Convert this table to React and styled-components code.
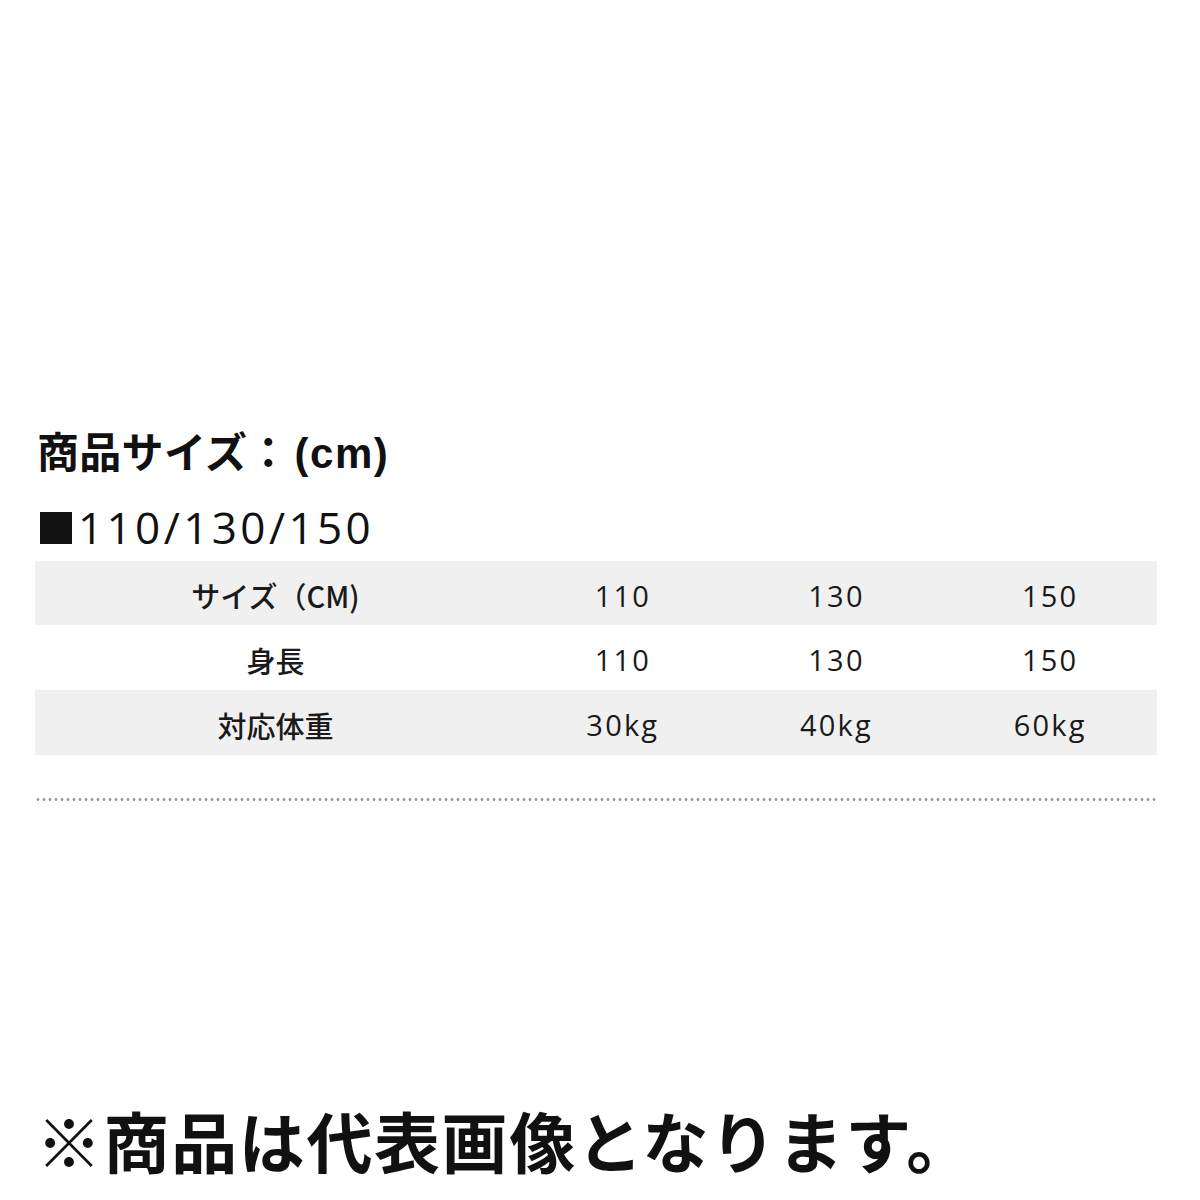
import React from "react";
import styled, { createGlobalStyle } from "styled-components";

const Global = createGlobalStyle`
  html, body { margin: 0; padding: 0; background: #fff; }
  body { font-family: "Noto Sans CJK JP", "Noto Sans", sans-serif; color: #111; }
`;

const Page = styled.div`
  width: 1200px;
  height: 1200px;
  box-sizing: border-box;
  padding: 424px 43px 0 35px;
  display: flex;
  flex-direction: column;
`;

const Title = styled.h2`
  margin: 0 0 0 2px;
  font-family: "Liberation Sans", "Noto Sans CJK JP", sans-serif;
  font-size: 42px;
  font-weight: 700;
  line-height: 60px;
  letter-spacing: 0.3px;
`;

const Unit = styled.span`
  margin-left: 5px;
  letter-spacing: 1.5px;
`;

const Sizes = styled.div`
  margin: 18px 0 0 5px;
  font-family: "Open Sans", "Liberation Sans", sans-serif;
  font-size: 44px;
  font-weight: 400;
  line-height: 50px;
  letter-spacing: 3.4px;
  display: flex;
  align-items: center;
`;

const Square = styled.span`
  display: inline-block;
  width: 32px;
  height: 32px;
  background: #111;
  margin-right: 6px;
  margin-top: 2px;
`;

const Table = styled.div`
  margin-top: 9px;
  display: grid;
  grid-template-columns: 481px repeat(3, 1fr);
`;

const Cell = styled.div`
  height: ${(p) => p.$h}px;
  background: ${(p) => (p.$shade ? "#f0f0f0" : "#fff")};
  display: flex;
  align-items: center;
  justify-content: center;
  font-family: ${(p) =>
    p.$num
      ? `"Open Sans", "Liberation Sans", sans-serif`
      : `"Noto Sans CJK JP", sans-serif`};
  font-size: 29px;
  font-weight: ${(p) => (p.$num ? 400 : 500)};
  letter-spacing: ${(p) => (p.$num ? "2.2px" : "0")};
  color: #1a1a1a;
  padding-top: 4px;
  box-sizing: border-box;
`;

const Dotted = styled.div`
  margin-top: 43px;
  height: 3px;
  background-image: radial-gradient(circle, #a0a0a0 1.3px, transparent 1.7px);
  background-size: 6px 3px;
  background-repeat: repeat-x;
`;

const Note = styled.div`
  margin-top: 298px;
  margin-left: 1px;
  font-size: 66px;
  font-weight: 700;
  line-height: 80px;
  letter-spacing: 1.6px;
`;

const rows = [
  ["サイズ（CM)", "110", "130", "150"],
  ["身長", "110", "130", "150"],
  ["対応体重", "30kg", "40kg", "60kg"],
];
const heights = [64, 65, 65];

export default function App() {
  return (
    <>
      <Global />
      <Page>
        <Title>
          商品サイズ：<Unit>(cm)</Unit>
        </Title>
        <Sizes>
          <Square />
          110/130/150
        </Sizes>
        <Table>
          {rows.map((r, i) =>
            r.map((c, j) => (
              <Cell key={`${i}-${j}`} $shade={i !== 1} $h={heights[i]} $num={j > 0}>
                {c}
              </Cell>
            ))
          )}
        </Table>
        <Dotted />
        <Note>※商品は代表画像となります。</Note>
      </Page>
    </>
  );
}
